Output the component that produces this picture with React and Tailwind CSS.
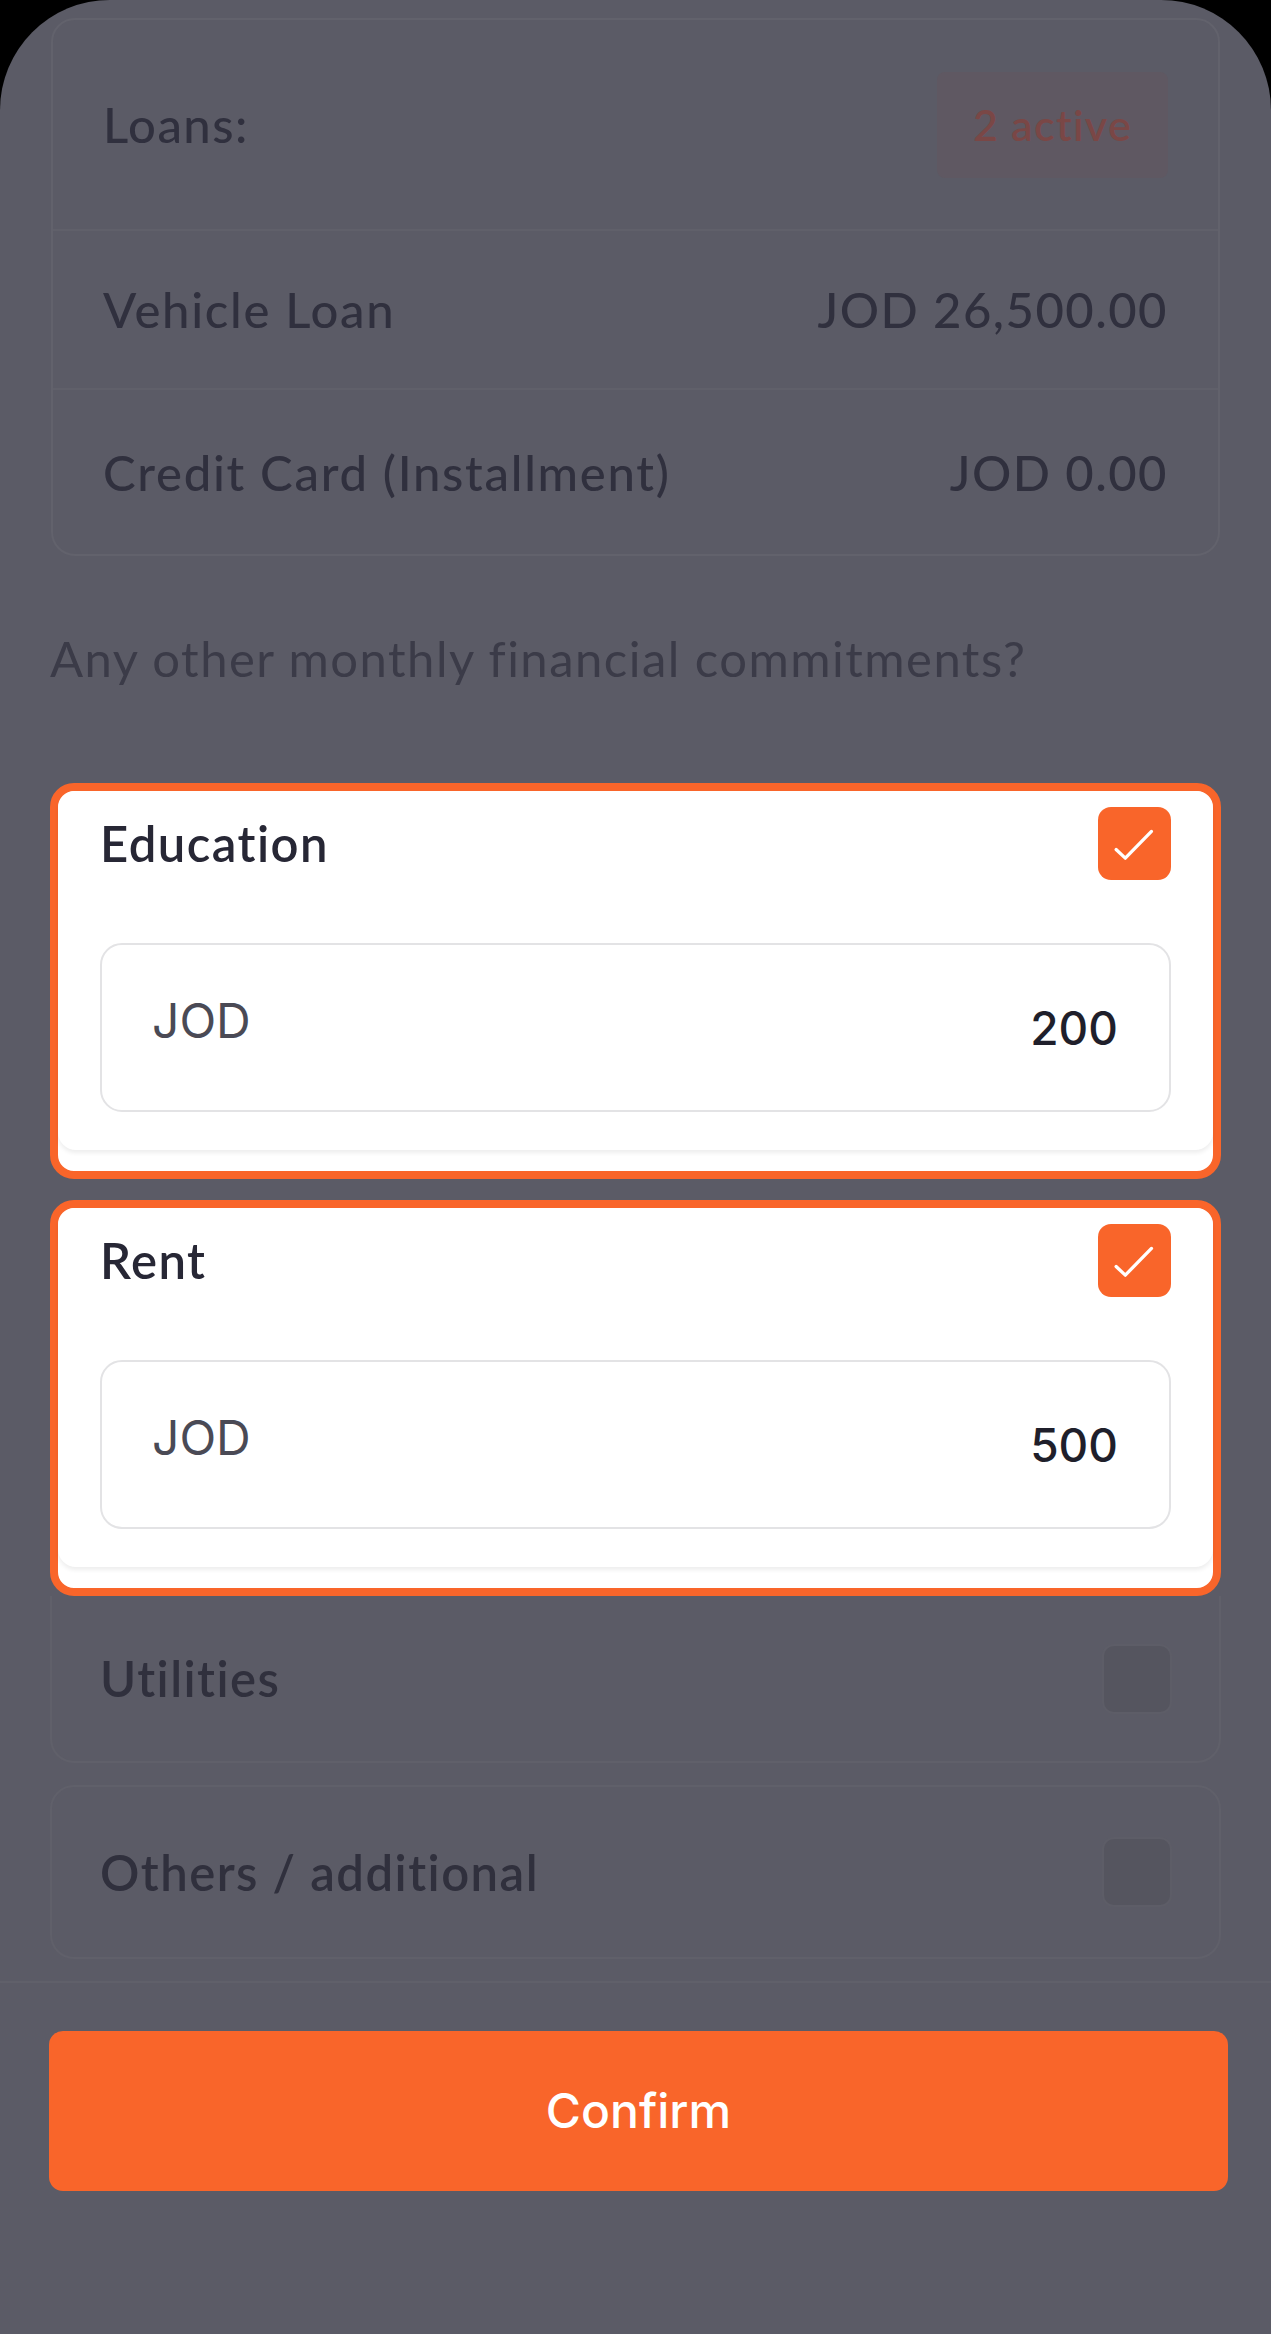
import { useState } from 'react';

const LOANS = [
  { label: 'Vehicle Loan', amount: 'JOD 26,500.00' },
  { label: 'Credit Card (Installment)', amount: 'JOD 0.00' },
];

function CheckIcon() {
  return (
    <svg viewBox="0 0 24 24" className="w-full h-full" fill="none">
      <path
        d="M5.6 14.1 L8.8 17.1 L17.9 7.8"
        stroke="#ffffff"
        strokeWidth="1.15"
        strokeLinecap="round"
        strokeLinejoin="round"
      />
    </svg>
  );
}

function ActiveItem({ title, value }) {
  // highlighted (spotlit) commitment card with amount input
  return (
    <div className="rounded-[24px] border-[8px] border-[#f9652a] bg-white h-[396px]">
      <div className="rounded-[18px] bg-white shadow-[0_3px_4px_rgba(0,0,0,0.07)] px-[42px] pt-[16px] pb-[38px]">
        <div className="flex items-center justify-between h-[73px]">
          <span className="text-[49px] leading-none font-semibold tracking-[0.03em] text-[#272735]">{title}</span>
          <div className="w-[73px] h-[73px] rounded-[13px] bg-[#f9652a] p-[2px]">
            <CheckIcon />
          </div>
        </div>
        <div className="mt-[63px] h-[169px] rounded-[22px] border-2 border-[#e3e3e5] flex items-center justify-between pl-[50px] pr-[51px] font-[Inter,'Liberation_Sans',sans-serif]">
          <span className="text-[48px] leading-none text-[#4a4a55] -mt-[14px]">JOD</span>
          <span className="text-[46px] leading-none font-medium text-[#1f1f2b]">{value}</span>
        </div>
      </div>
    </div>
  );
}

function DimItem({ title, noTop }) {
  return (
    <div
      className={
        'rounded-[24px] border-2 border-[#60606a] flex items-center justify-between pl-[48px] pr-[47px] ' +
        (noTop ? 'border-t-0 rounded-t-none h-[167px]' : 'h-[174px]')
      }
    >
      <span className="text-[49px] leading-none font-semibold tracking-[0.03em] text-[#30303d]">{title}</span>
      <div className="w-[70px] h-[70px] rounded-[12px] bg-[#55555f] border-2 border-[#5d5d67]" />
    </div>
  );
}

export default function App() {
  const [items] = useState([
    { title: 'Education', value: '200' },
    { title: 'Rent', value: '500' },
  ]);

  return (
    <div className="w-[1271px] h-[2334px] bg-black font-[Lato,'Noto_Sans',sans-serif]">
      <div className="h-full bg-[#5b5b66] rounded-t-[110px] flex flex-col">
        <div className="px-[51px] pt-[18px]">
          {/* Loans summary */}
          <div className="rounded-[24px] border-2 border-[#62626c]">
            <div className="h-[211px] flex items-center justify-between pl-[50px] pr-[50px] border-b-2 border-[#60606a]">
              <span className="text-[49px] leading-none font-medium tracking-[0.03em] text-[#30303e]">Loans:</span>
              <span className="w-[231px] h-[106px] rounded-[8px] bg-[#5f5862] flex items-center justify-center text-[43px] leading-none font-semibold tracking-[0.03em] text-[#7a4746]">
                2 active
              </span>
            </div>
            {LOANS.map((loan, i) => (
              <div
                key={loan.label}
                className={
                  'flex items-center justify-between pl-[50px] pr-[50px] ' +
                  (i === 0 ? 'h-[159px] border-b-2 border-[#60606a]' : 'h-[164px]')
                }
              >
                <span className="text-[49px] leading-none font-medium tracking-[0.035em] text-[#30303e]">{loan.label}</span>
                <span className="text-[49px] leading-none font-medium tracking-[0.03em] text-[#30303e]">{loan.amount}</span>
              </div>
            ))}
          </div>

          <p className="mt-[78px] -ml-px text-[49px] leading-[48px] tracking-[0.03em] text-[#3b3b48]">
            Any other monthly financial commitments?
          </p>

          <div className="mt-[101px] -mx-px flex flex-col">
            {items.map((it, i) => (
              <div key={it.title} className={i > 0 ? 'mt-[21px]' : ''}>
                <ActiveItem title={it.title} value={it.value} />
              </div>
            ))}
            <DimItem title="Utilities" noTop />
            <div className="mt-[22px]">
              <DimItem title="Others / additional" />
            </div>
          </div>
        </div>

        {/* footer */}
        <div className="mt-[22px] border-t-2 border-[#60606a] flex-1">
          <button className="mt-[48px] ml-[49px] w-[1179px] h-[160px] rounded-[14px] bg-[#f9652a] text-white text-[48px] font-medium font-[Inter,'Liberation_Sans',sans-serif]">
            Confirm
          </button>
        </div>
      </div>
    </div>
  );
}
